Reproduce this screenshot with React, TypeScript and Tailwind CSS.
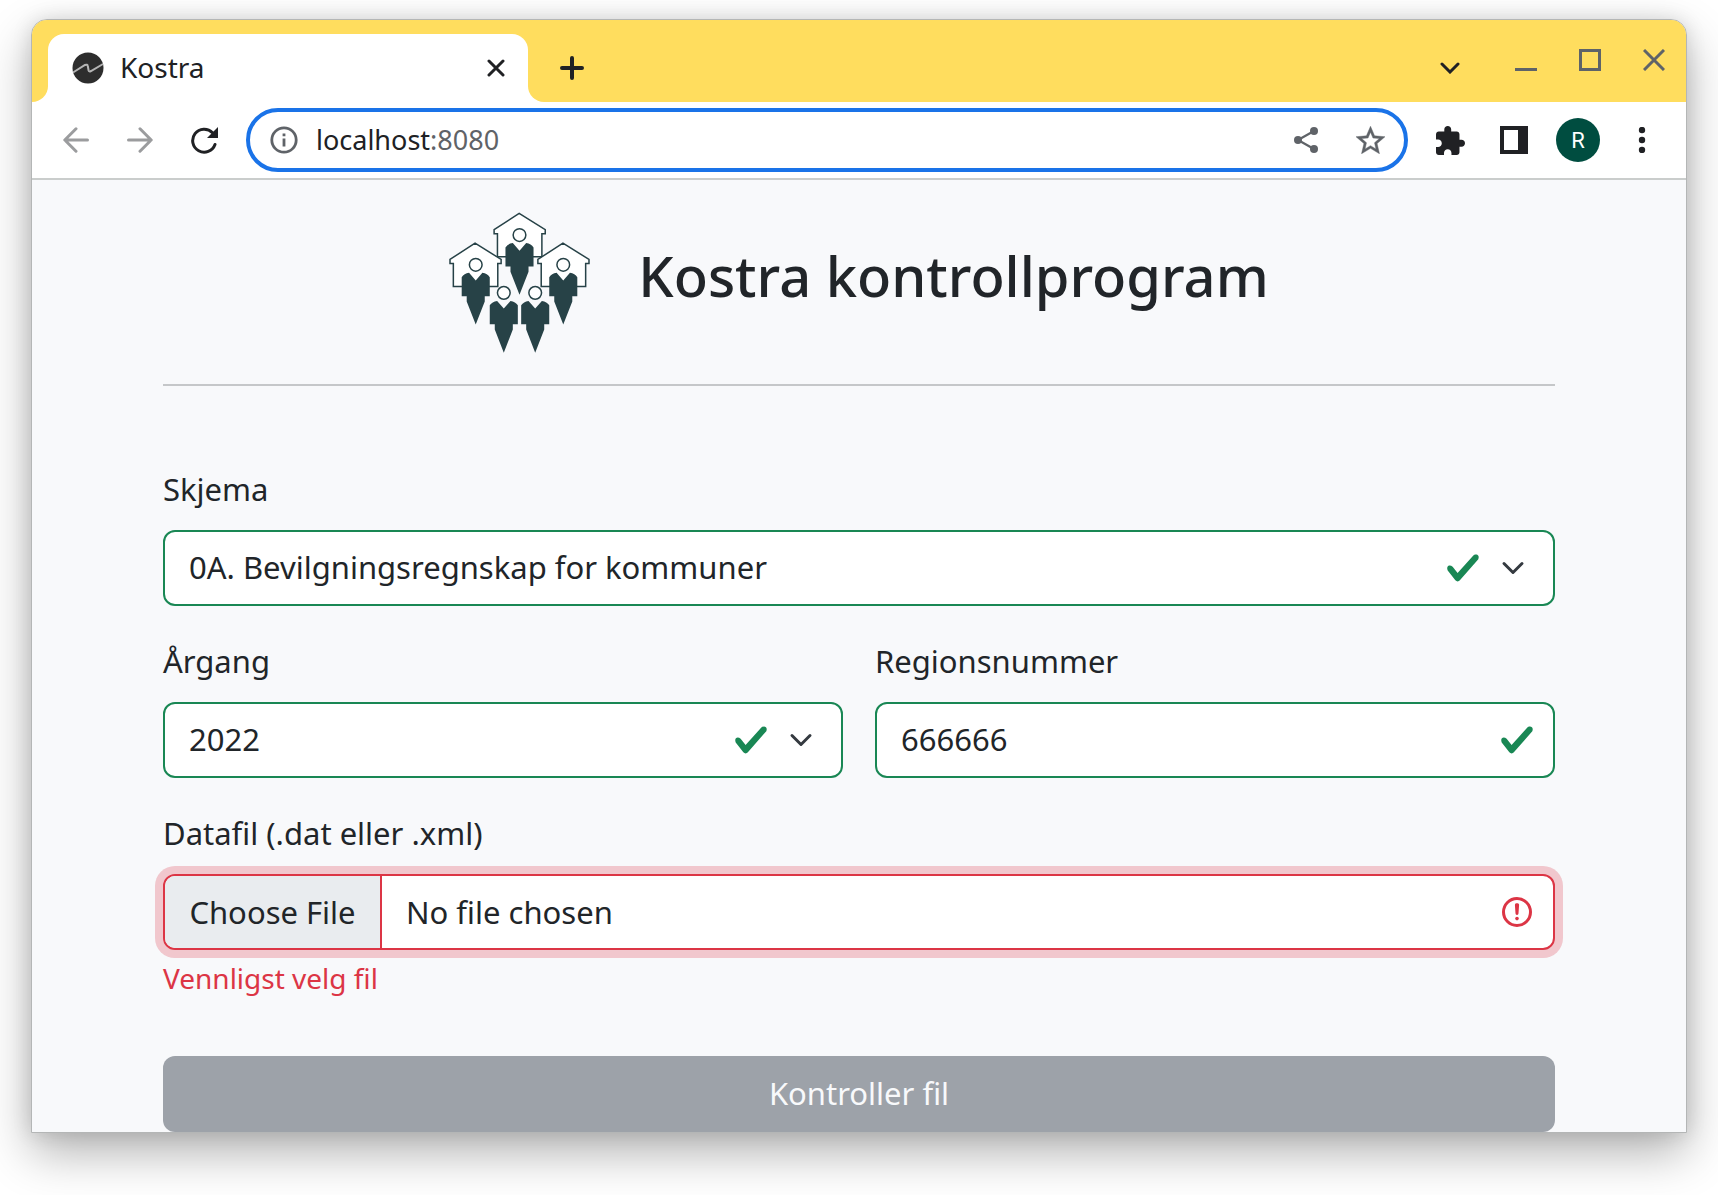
import React, { useState } from "react";

const SANS = "font-['Noto_Sans','Open_Sans',sans-serif]";

function Favicon() {
  return (
    <svg viewBox="0 0 32 32" className="size-8" aria-hidden="true">
      <circle cx="16" cy="16" r="15.500" fill="#2d2d2d" />
      <path
        d="M1 20.500 L13 13 Q15.500 12 15.800 14 L16.600 18.500 Q17 20 19 19 L31 12"
        fill="none"
        stroke="#b4b4b4"
        strokeWidth="2"
      />
    </svg>
  );
}

function Person({ x, y }: { x: number; y: number }) {
  return (
    <g transform={`translate(${x} ${y})`}>
      <circle cx="0" cy="0" r="19" fill="#fff" stroke="#274247" strokeWidth="4.500" />
      <path
        d="M-42 94 V37 Q-35 26 -20 24 L0 47 L20 24 Q35 26 42 37 V94 H27 V110 L0 179 L-27 110 V94 Z"
        fill="#274247"
      />
    </g>
  );
}

function House({ x, y }: { x: number; y: number }) {
  return (
    <path
      transform={`translate(${x} ${y})`}
      d="M-76 -16 L-1 -65 L77 -16 V-4 H67 V65 H-66 V-4 H-76 Z"
      fill="#fff"
      stroke="#274247"
      strokeWidth="4.500"
    />
  );
}

function Logo() {
  return (
    <svg viewBox="62 35 422 422" className="size-[141px] shrink-0" role="img" aria-label="Kostra">
      <House x={273} y={104} />
      <House x={141} y={193} />
      <House x={404} y={193} />
      <Person x={273} y={104} />
      <Person x={142} y={193} />
      <Person x={404} y={193} />
      <Person x={226} y={277} />
      <Person x={320} y={277} />
    </svg>
  );
}

function IconButton({
  label,
  className = "",
  children,
}: {
  label: string;
  className?: string;
  children: React.ReactNode;
}) {
  return (
    <button type="button" aria-label={label} className={`flex shrink-0 items-center justify-center ${className}`}>
      {children}
    </button>
  );
}

function ArrowIcon({ flip = false }: { flip?: boolean }) {
  return (
    <svg viewBox="0 0 26 26" className={flip ? "size-[26px] rotate-180" : "size-[26px]"} fill="none" stroke="#9b9c9e" strokeWidth="3" strokeLinecap="round" strokeLinejoin="round">
      <path d="M24.500 13 H2 M13 1.800 L1.800 13 L13 24.200" />
    </svg>
  );
}

function TabStrip() {
  return (
    <div className="rounded-t-[15px] bg-[#ffdd5e] pt-3.5">
      <div className="flex h-[68px] bg-white">
        <div className="w-4 shrink-0 rounded-br-2xl bg-[#ffdd5e]" />
        <div className="w-[480px] shrink-0 bg-[#ffdd5e]">
          <div className="flex h-full items-center rounded-t-2xl bg-white pr-5 pl-6">
            <Favicon />
            <span className="ml-4 flex-1 pb-0.5 text-[28px] text-[#202124]">Kostra</span>
            <IconButton label="Close tab" className="size-6">
              <svg viewBox="0 0 18 18" className="size-[18px]" stroke="#202124" strokeWidth="3" strokeLinecap="round">
                <path d="M2 2 L16 16 M16 2 L2 16" />
              </svg>
            </IconButton>
          </div>
        </div>
        <div className="flex flex-1 items-center rounded-bl-2xl bg-[#ffdd5e] pr-3 pl-7">
          <IconButton label="New tab" className="size-8">
            <svg viewBox="0 0 24 24" className="size-6" stroke="#202124" strokeWidth="4" strokeLinecap="round">
              <path d="M12 2 V22 M2 12 H22" />
            </svg>
          </IconButton>
          <IconButton label="Search tabs" className="ml-auto size-8">
            <svg viewBox="0 0 20 12" className="h-3 w-5" fill="none" stroke="#202124" strokeWidth="3" strokeLinecap="round">
              <path d="M2 2 L10 10 L18 2" />
            </svg>
          </IconButton>
          <div className="ml-10 flex h-[52px] items-center gap-6 self-start">
            <IconButton label="Minimize" className="size-10">
              <svg viewBox="0 0 22 22" className="size-[22px]">
                <path d="M0 19 H22 V22 H0 Z" fill="#5f6368" />
              </svg>
            </IconButton>
            <IconButton label="Maximize" className="size-10">
              <svg viewBox="0 0 22 22" className="size-[22px]" fill="none" stroke="#5f6368" strokeWidth="3">
                <path d="M1.500 1.500 H20.500 V20.500 H1.500 Z" />
              </svg>
            </IconButton>
            <IconButton label="Close" className="size-10">
              <svg viewBox="0 0 22 22" className="size-[22px]" stroke="#5f6368" strokeWidth="3">
                <path d="M1 1 L21 21 M21 1 L1 21" />
              </svg>
            </IconButton>
          </div>
        </div>
      </div>
    </div>
  );
}

function AddressField() {
  const [host, setHost] = useState("localhost");
  const [port, setPort] = useState(":8080");
  return (
    <div className="ml-[18px] flex flex-1 text-[27px] leading-9">
      <input
        aria-label="Host"
        className="field-sizing-content bg-transparent text-[#202124] outline-none"
        value={host}
        onChange={(e) => setHost(e.target.value)}
      />
      <input
        aria-label="Port"
        className="min-w-0 flex-1 bg-transparent text-[#5f6368] outline-none"
        value={port}
        onChange={(e) => setPort(e.target.value)}
      />
    </div>
  );
}

function Toolbar() {
  return (
    <div className="flex items-center border-b-2 border-[#cacdcc] bg-white py-1.5 pr-7 pl-6">
      <IconButton label="Back" className="size-10">
        <ArrowIcon />
      </IconButton>
      <IconButton label="Forward" className="ml-6 size-10">
        <ArrowIcon flip />
      </IconButton>
      <IconButton label="Reload" className="ml-6 size-10">
        <svg viewBox="0 0 27 27" className="size-[27px]">
          <path d="M24 17.500 A11.500 11.500 0 1 1 21.500 5.700" fill="none" stroke="#202124" strokeWidth="3" strokeLinecap="round" />
          <path d="M27 0 V11 H16 Z" fill="#202124" />
        </svg>
      </IconButton>
      <div className="ml-[22px] flex h-16 flex-1 items-center rounded-full border-4 border-[#1a73e8] bg-white pr-6 pl-5">
        <IconButton label="Site information" className="size-7">
          <svg viewBox="0 0 28 28" className="size-7">
            <circle cx="14" cy="14" r="12.200" fill="none" stroke="#5f6368" strokeWidth="2.800" />
            <path d="M12.600 12.500 h2.800 v8 h-2.800 Z M12.600 7.500 h2.800 v2.800 h-2.800 Z" fill="#5f6368" />
          </svg>
        </IconButton>
        <AddressField />
        <IconButton label="Share" className="size-8">
          <svg viewBox="0 0 24 26" className="h-[26px] w-6" fill="#5f6368">
            <path d="M4 13 L20 4 M4 13 L20 22" stroke="#5f6368" strokeWidth="2.200" />
            <circle cx="4" cy="13" r="4" />
            <circle cx="20" cy="4" r="4" />
            <circle cx="20" cy="22" r="4" />
          </svg>
        </IconButton>
        <IconButton label="Bookmark this page" className="-mr-1.5 ml-8 size-8">
          <svg viewBox="2 2 20 19" className="h-7 w-[29px]" fill="#5f6368" stroke="#5f6368" strokeWidth="0.300">
            <path d="M22 9.240l-7.190-.62L12 2 9.190 8.630 2 9.240l5.460 4.730L5.820 21 12 17.270 18.180 21l-1.630-7.030L22 9.240zM12 15.400l-3.760 2.270 1-4.280-3.320-2.880 4.380-.38L12 6.100l1.710 4.040 4.380.38-3.320 2.880 1 4.280L12 15.400z" />
          </svg>
        </IconButton>
      </div>
      <IconButton label="Extensions" className="ml-[26px] size-8">
        <svg viewBox="2 1 21 21" className="size-[29px]" fill="#202124">
          <path d="M20.500 11H19V7c0-1.100-.9-2-2-2h-4V3.500C13 2.120 11.880 1 10.500 1S8 2.120 8 3.500V5H4c-1.100 0-1.990.9-1.990 2v3.800H3.500c1.490 0 2.700 1.210 2.700 2.700s-1.210 2.700-2.700 2.700H2V20c0 1.100.9 2 2 2h3.800v-1.500c0-1.490 1.210-2.700 2.700-2.700 1.490 0 2.700 1.210 2.700 2.700V22H17c1.100 0 2-.9 2-2v-4h1.500c1.380 0 2.500-1.120 2.500-2.500S21.880 11 20.500 11z" />
        </svg>
      </IconButton>
      <IconButton label="Side panel" className="ml-8 size-8">
        <svg viewBox="0 0 28 28" className="size-7">
          <path d="M0 0 H28 V28 H0 Z" fill="#202124" />
          <path d="M4 4 H18 V24 H4 Z" fill="#fff" />
        </svg>
      </IconButton>
      <button
        type="button"
        aria-label="Profile R"
        className="ml-[26px] flex size-11 shrink-0 items-center justify-center rounded-full bg-[#004d40] font-['Roboto',sans-serif] text-[22px] text-white"
      >
        R
      </button>
      <IconButton label="Menu" className="ml-[26px] size-8">
        <svg viewBox="0 0 8 26" className="h-[26px] w-2" fill="#202124">
          <circle cx="4" cy="3" r="3.200" />
          <circle cx="4" cy="13" r="3.200" />
          <circle cx="4" cy="23" r="3.200" />
        </svg>
      </IconButton>
    </div>
  );
}

function CheckIcon() {
  return (
    <svg viewBox="0 0 8 8" className="size-9" fill="#198754" aria-hidden="true">
      <path d="M2.300 6.730.6 4.530c-.4-1.040.46-1.400 1.100-.8l1.100 1.400 3.400-3.800c.6-.63 1.600-.27 1.200.7l-4 4.600c-.43.5-.8.4-1.100.1z" />
    </svg>
  );
}

function ChevronIcon() {
  return (
    <svg viewBox="0 0 16 16" className="size-6" fill="none" stroke="#343a40" strokeWidth="2" strokeLinecap="round" strokeLinejoin="round" aria-hidden="true">
      <path d="m2 5 6 6 6-6" />
    </svg>
  );
}

function ErrorIcon() {
  return (
    <svg viewBox="0 0 12 12" className="size-9" fill="none" stroke="#dc3545" aria-hidden="true">
      <circle cx="6" cy="6" r="4.500" />
      <path strokeLinejoin="round" d="M5.800 3.600h.4L6 6.500z" />
      <circle cx="6" cy="8.200" r=".6" fill="#dc3545" stroke="none" />
    </svg>
  );
}

const labelClass = "mb-[18px] block text-[31px] leading-[46px]";
const controlClass =
  "h-[76px] w-full appearance-none rounded-xl border-2 border-[#198754] bg-white pb-0.5 pl-6 text-[31px] outline-none";

function SelectField({ id, label, options }: { id: string; label: string; options: string[] }) {
  return (
    <div>
      <label htmlFor={id} className={labelClass}>
        {label}
      </label>
      <div className="relative">
        <select id={id} className={controlClass}>
          {options.map((option) => (
            <option key={option}>{option}</option>
          ))}
        </select>
        <div className="pointer-events-none absolute inset-y-0 right-[30px] flex items-center gap-5">
          <CheckIcon />
          <ChevronIcon />
        </div>
      </div>
    </div>
  );
}

function ControlForm() {
  return (
    <form className="grid gap-8" onSubmit={(e) => e.preventDefault()}>
      <SelectField id="skjema" label="Skjema" options={["0A. Bevilgningsregnskap for kommuner"]} />
      <div className="grid grid-cols-2 gap-8">
        <SelectField id="aargang" label="Årgang" options={["2022"]} />
        <div>
          <label htmlFor="region" className={labelClass}>
            Regionsnummer
          </label>
          <div className="relative">
            <input id="region" type="text" defaultValue="666666" className={controlClass} />
            <div className="pointer-events-none absolute inset-y-0 right-5 flex items-center">
              <CheckIcon />
            </div>
          </div>
        </div>
      </div>
      <div>
        <label htmlFor="datafil" className={labelClass}>
          Datafil (.dat eller .xml)
        </label>
        <div className="relative">
          <input
            id="datafil"
            type="file"
            accept=".dat,.xml"
            aria-describedby="datafil-feil"
            className="block h-[76px] w-full overflow-hidden rounded-xl border-2 border-[#dc3545] bg-white text-[31px] leading-[72px] shadow-[0_0_0_8px_rgba(220,53,69,0.25)] outline-none file:mr-6 file:h-[72px] file:w-[217px] file:border-r-2 file:border-solid file:border-[#dc3545] file:bg-[#e9ecef] file:p-0 file:pb-0.5 file:text-[#212529]"
          />
          <div className="pointer-events-none absolute inset-y-0 right-5 flex items-center">
            <ErrorIcon />
          </div>
        </div>
        <p id="datafil-feil" className="mt-2 text-[28px] leading-10 text-[#dc3545]">
          Vennligst velg fil
        </p>
      </div>
      <button type="submit" disabled className="mt-[26px] h-[76px] w-full rounded-xl bg-[#9da2a9] pb-0.5 text-[31px] text-[#f8f9fb]">
        Kontroller fil
      </button>
    </form>
  );
}

export default function App() {
  return (
    <div className={`min-h-screen overflow-hidden bg-white px-[31px] pt-[19px] pb-[62px] text-[#212529] ${SANS}`}>
      <div className="rounded-t-2xl border border-[#b4b6b6] bg-[#f8f9fb] shadow-[0_20px_48px_rgba(0,0,0,0.3),0_0_20px_rgba(0,0,0,0.12)]">
        <TabStrip />
        <Toolbar />
        <main className="mx-auto max-w-[1456px] px-8 pt-8">
          <header className="mb-20 flex items-center justify-center gap-12 border-b-2 border-[#c5c7c9] pb-[31px]">
            <Logo />
            <h1 className="pb-4 text-[56px] leading-[68px] font-medium">Kostra kontrollprogram</h1>
          </header>
          <ControlForm />
        </main>
      </div>
    </div>
  );
}
